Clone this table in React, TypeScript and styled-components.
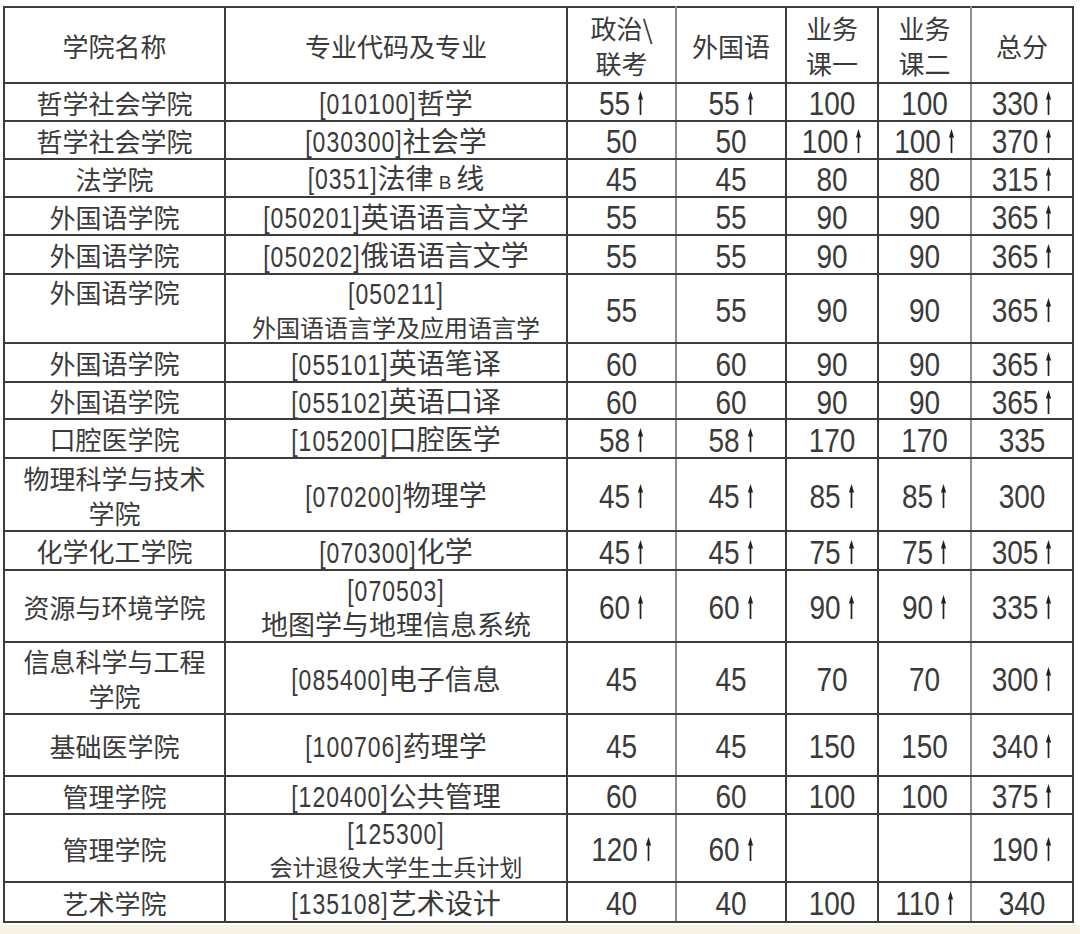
import React from "react";
import styled, { createGlobalStyle } from "styled-components";

const GlobalStyle = createGlobalStyle`
  html, body {
    margin: 0;
    padding: 0;
    background: #ffffff;
  }
  body {
    font-family: "Noto Sans CJK SC", "Liberation Sans", sans-serif;
    color: #3a3a3a;
  }
`;

const Page = styled.div`
  width: 1080px;
  height: 934px;
  display: flex;
  flex-direction: column;
  overflow: hidden;
`;

const TableWrap = styled.div`
  padding: 6px 6px 0 3px;
  background: #fff;
`;

const Strip = styled.div`
  flex: 1;
  margin-top: 2px;
  background: #f8f2e6;
`;

const Table = styled.table`
  border-collapse: collapse;
  table-layout: fixed;
  width: 1069px;
`;

const Row = styled.tr<{ $h: number }>`
  height: ${(p) => p.$h}px;

  & > *:nth-child(3),
  & > *:nth-child(6) {
    border-right-color: #8e8e8e;
  }
`;

const Head = styled.th`
  border: 2px solid #3c3c3c;
  font-weight: 400;
  font-size: 26px;
  line-height: 35px;
  padding: 0;
  text-align: center;
  vertical-align: middle;
  color: #3a3a3a;
`;

const Cell = styled.td<{ $top?: boolean; $lh?: number }>`
  border: 2px solid #3c3c3c;
  font-size: 26px;
  line-height: ${(p) => p.$lh ?? 33}px;
  padding: 0;
  text-align: center;
  vertical-align: ${(p) => (p.$top ? "top" : "middle")};
  white-space: nowrap;
  color: #3a3a3a;
`;

const Code = styled.span`
  display: inline-block;
  font-family: "Liberation Sans", sans-serif;
  font-size: 23px;
  line-height: 22px;
  letter-spacing: 1px;
  transform: translateY(-2px) scaleY(1.3);
  vertical-align: middle;
`;

const Major = styled.span<{ $size?: number }>`
  font-size: ${(p) => p.$size ?? 28}px;
  line-height: 26px;
`;

const Tiny = styled.span`
  font-family: "Liberation Sans", sans-serif;
  font-size: 19px;
  margin: 0 5px;
`;

const ValueBox = styled.span`
  display: inline-flex;
  align-items: center;
  gap: 7px;
  vertical-align: middle;
  transform: translateY(-2px);
`;

const Num = styled.span`
  display: inline-block;
  font-family: "Liberation Sans", sans-serif;
  font-size: 28px;
  line-height: 24px;
  transform: scaleY(1.18);
`;

const ArrowIcon = styled.svg`
  width: 7px;
  height: 24px;
  margin-top: -2px;
`;

const Up = () => (
  <ArrowIcon viewBox="0 0 7 24">
    <polygon points="3.5,0 0.9,8.5 6.1,8.5" fill="#222" />
    <rect x="2.65" y="7" width="1.7" height="17" fill="#222" />
  </ArrowIcon>
);

type RowData = {
  h: number;
  college: string[];
  collegeTop?: boolean;
  code: string;
  major: React.ReactNode;
  majorBreak?: boolean;
  majorSize?: number;
  vals: string[];
};

const rows: RowData[] = [
  { h: 38, college: ["哲学社会学院"], code: "[010100]", major: "哲学", vals: ["55↑", "55↑", "100", "100", "330↑"] },
  { h: 38, college: ["哲学社会学院"], code: "[030300]", major: "社会学", vals: ["50", "50", "100↑", "100↑", "370↑"] },
  {
    h: 38,
    college: ["法学院"],
    code: "[0351]",
    major: (
      <>
        法律<Tiny>B</Tiny>线
      </>
    ),
    vals: ["45", "45", "80", "80", "315↑"],
  },
  { h: 38, college: ["外国语学院"], code: "[050201]", major: "英语语言文学", vals: ["55", "55", "90", "90", "365↑"] },
  { h: 39, college: ["外国语学院"], code: "[050202]", major: "俄语语言文学", vals: ["55", "55", "90", "90", "365↑"] },
  {
    h: 69,
    college: ["外国语学院"],
    collegeTop: true,
    code: "[050211]",
    major: "外国语语言学及应用语言学",
    majorBreak: true,
    majorSize: 24,
    vals: ["55", "55", "90", "90", "365↑"],
  },
  { h: 39, college: ["外国语学院"], code: "[055101]", major: "英语笔译", vals: ["60", "60", "90", "90", "365↑"] },
  { h: 37, college: ["外国语学院"], code: "[055102]", major: "英语口译", vals: ["60", "60", "90", "90", "365↑"] },
  { h: 39, college: ["口腔医学院"], code: "[105200]", major: "口腔医学", vals: ["58↑", "58↑", "170", "170", "335"] },
  {
    h: 73,
    college: ["物理科学与技术", "学院"],
    code: "[070200]",
    major: "物理学",
    vals: ["45↑", "45↑", "85↑", "85↑", "300"],
  },
  { h: 39, college: ["化学化工学院"], code: "[070300]", major: "化学", vals: ["45↑", "45↑", "75↑", "75↑", "305↑"] },
  {
    h: 72,
    college: ["资源与环境学院"],
    code: "[070503]",
    major: "地图学与地理信息系统",
    majorBreak: true,
    majorSize: 27,
    vals: ["60↑", "60↑", "90↑", "90↑", "335↑"],
  },
  {
    h: 72,
    college: ["信息科学与工程", "学院"],
    code: "[085400]",
    major: "电子信息",
    vals: ["45", "45", "70", "70", "300↑"],
  },
  { h: 62, college: ["基础医学院"], code: "[100706]", major: "药理学", vals: ["45", "45", "150", "150", "340↑"] },
  { h: 38, college: ["管理学院"], code: "[120400]", major: "公共管理", vals: ["60", "60", "100", "100", "375↑"] },
  {
    h: 68,
    college: ["管理学院"],
    code: "[125300]",
    major: "会计退役大学生士兵计划",
    majorBreak: true,
    majorSize: 23,
    vals: ["120↑", "60↑", "", "", "190↑"],
  },
  { h: 40, college: ["艺术学院"], code: "[135108]", major: "艺术设计", vals: ["40", "40", "100", "110↑", "340"] },
];

const Value = ({ v }: { v: string }) => {
  if (!v) return null;
  const up = v.endsWith("↑");
  return (
    <ValueBox>
      <Num>{up ? v.slice(0, -1) : v}</Num>
      {up && <Up />}
    </ValueBox>
  );
};

const Lines = ({ lines }: { lines: string[] }) => (
  <>
    {lines.map((l, i) => (
      <React.Fragment key={i}>
        {i > 0 && <br />}
        {l}
      </React.Fragment>
    ))}
  </>
);

const widths = [221, 342, 109, 110, 92, 93, 102];

export default function App() {
  return (
    <Page>
      <GlobalStyle />
      <TableWrap>
        <Table>
          <colgroup>
            {widths.map((w, i) => (
              <col key={i} style={{ width: w }} />
            ))}
          </colgroup>
          <thead>
            <Row $h={76}>
              <Head>学院名称</Head>
              <Head>专业代码及专业</Head>
              <Head>
                政治\
                <br />
                联考
              </Head>
              <Head>外国语</Head>
              <Head>
                业务
                <br />
                课一
              </Head>
              <Head>
                业务
                <br />
                课二
              </Head>
              <Head>总分</Head>
            </Row>
          </thead>
          <tbody>
            {rows.map((r, i) => {
              const lh = r.h >= 72 ? 35 : 33;
              return (
                <Row $h={r.h} key={i}>
                  <Cell $top={r.collegeTop} $lh={lh}>
                    <Lines lines={r.college} />
                  </Cell>
                  <Cell $lh={lh}>
                    <Code>{r.code}</Code>
                    {r.majorBreak && <br />}
                    <Major $size={r.majorSize}>{r.major}</Major>
                  </Cell>
                  {r.vals.map((v, j) => (
                    <Cell key={j}>
                      <Value v={v} />
                    </Cell>
                  ))}
                </Row>
              );
            })}
          </tbody>
        </Table>
      </TableWrap>
      <Strip />
    </Page>
  );
}
